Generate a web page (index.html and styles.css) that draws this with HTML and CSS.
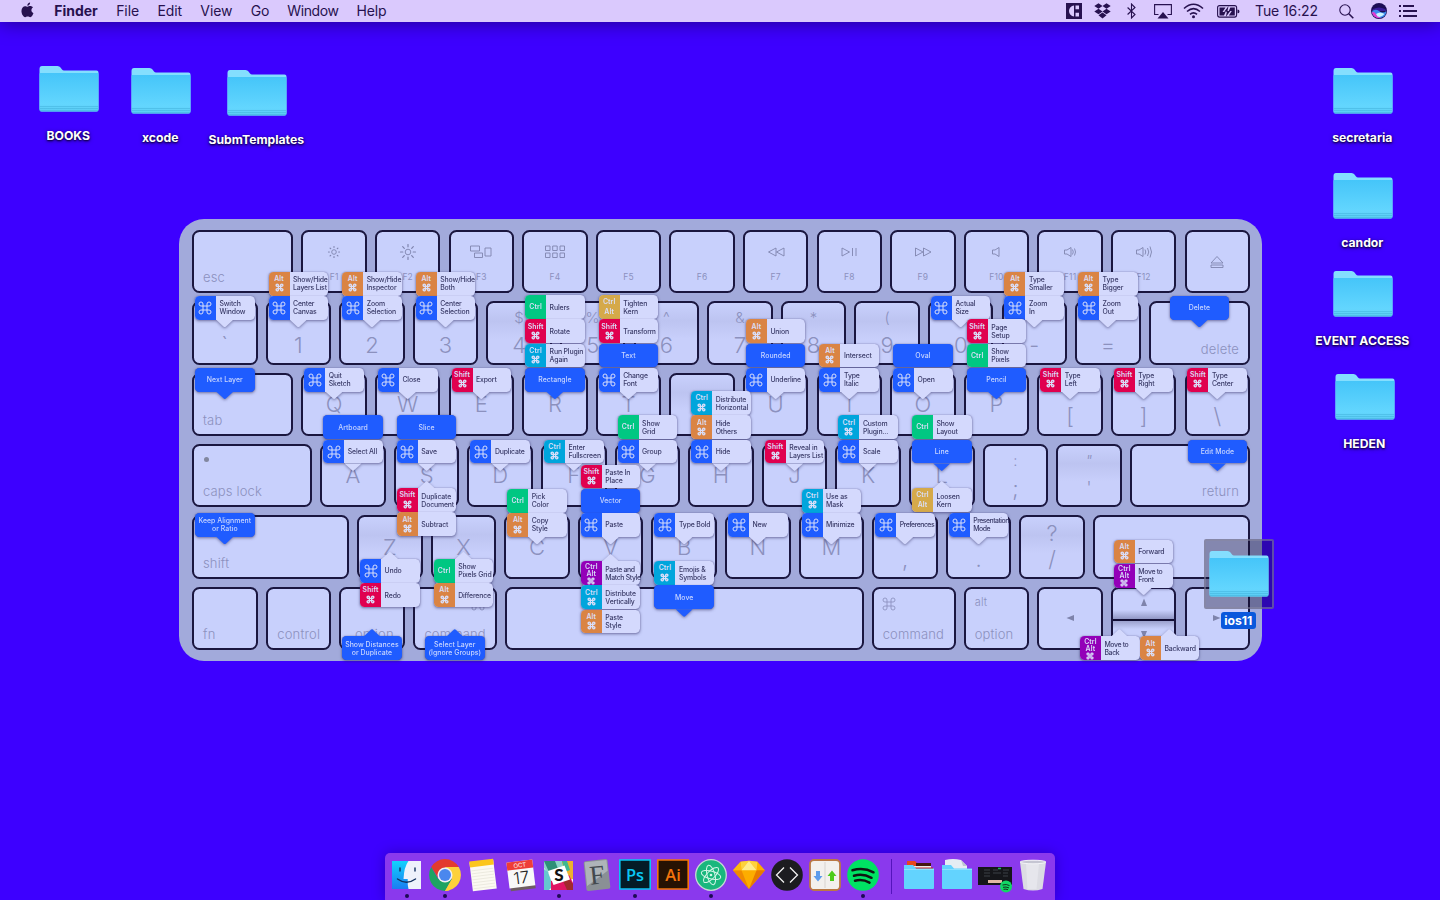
FILE: index.html
```html
<!DOCTYPE html>
<html lang="en">
<head>
<meta charset="utf-8">
<title>Desktop</title>
<link rel="stylesheet" href="styles.css">
</head>
<body>
<svg class="defs" aria-hidden="true">
  <defs>
    <linearGradient id="folderFront" x1="0" y1="0" x2="0" y2="1"><stop offset="0" stop-color="#45c5f9"/><stop offset=".8" stop-color="#63d6fe"/><stop offset="1" stop-color="#5acbf2"/></linearGradient>
    <symbol id="cmd" viewBox="0 0 24 24"><path d="M15 6v12a3 3 0 1 0 3-3H6a3 3 0 1 0 3 3V6a3 3 0 1 0-3 3h12a3 3 0 1 0-3-3" fill="none" stroke="currentColor"/></symbol>
    <symbol id="folder" viewBox="0 0 60 48">
      <path d="M.5 4Q.5 1 3 1h15.500q2 0 3 1.500l1.500 2q.8 1 2 1h32.500q2 0 2 2V44q0 2-2 2H2.500q-2 0-2-2z" fill="#84defe"/>
      <path d="M.5 9q0-1 1-1h57q1 0 1 1v36q0 1.800-2 1.800h-55q-2 0-2-1.800z" fill="url(#folderFront)"/>
      <path d="M.8 41.500h58.400M.8 43.500h58.400M1 45.500h58" stroke="#3fafd8" stroke-width=".7" opacity=".7"/>
    </symbol>
  </defs>
</svg>

<header class="menubar">
  <nav class="menus">
    <svg class="apple" viewBox="0 0 14 17"><path d="M9.800.5c.1 1.900-1.300 3.400-3 3.400C6.700 2.200 8.200.7 9.800.5zM7 5c.7 0 1.500-.7 2.900-.7 1.200 0 2.300.6 3 1.600-2.500 1.500-2.100 5 .5 6-.7 1.900-2 4.300-3.500 4.300-1 0-1.400-.6-2.700-.6s-1.700.6-2.700.6C2.300 16.200.5 12.700.5 9.700.5 6.300 2.600 4.400 4.400 4.400 5.600 4.400 6.400 5 7 5z"/></svg>
    <b class="app">Finder</b><span>File</span><span>Edit</span><span>View</span><span>Go</span><span class="narrow">Window</span><span>Help</span>
  </nav>
  <div class="status">
    <svg class="i-square" viewBox="0 0 16 16"><path d="M0 0h16v16H0z"/><path d="M8 2.500A5.300 5.500 0 0 0 3 8a5.300 5.500 0 0 0 5 5.500zM9.500 2.500H13v3.700H9.500zM9.500 9.800H13v3.700H9.500z" fill="#dac9fd"/></svg>
    <svg class="i-drop" viewBox="0 0 17 16"><path d="M4.500.3 8.500 3 4.500 5.800.3 3zM12.500.3 16.700 3l-4.200 2.800L8.500 3zM.3 8.500l4.200-2.700 4 2.700-4 2.800zM12.500 5.800l4.200 2.700-4.200 2.800-4-2.800zM4.500 12.200l4-2.700 4 2.700-4 3.200z"/></svg>
    <svg class="i-bt" viewBox="0 0 9 16"><path d="M.6 4.500l7.400 7L4.500 15V1L8 4.500l-7.400 7" class="ln"/></svg>
    <svg class="i-air" viewBox="0 0 18 15"><path d="M4.500 10.500H.6V.6h16.800v9.900h-3.900" class="ln"/><path d="M9 8l5.500 6.500h-11z"/></svg>
    <svg class="i-wifi" viewBox="0 0 21 16"><path d="M1 5.500q9.500-8.500 19 0M4 8.500q6.500-5.600 13 0M7 11.300q3.500-3 7 0" class="ln thick"/><circle cx="10.500" cy="13.800" r="1.500"/></svg>
    <svg class="i-bat" viewBox="0 0 23 13"><rect x=".6" y=".6" width="19" height="11.500" rx="2" class="ln"/><path d="M2.500 2.500h6l-3 4.500h3l-1.500 3.500H2.500zM17.800 10.500h-6l3-4.500h-3l1.500-3.500h4.500zM20.500 4.500q2 0 2 1.900t-2 1.900z"/><path d="M11.500 1 7.200 6.700h2.700L8.800 11.900 13.300 6h-2.800z"/></svg>
    <time>Tue 16:22</time>
    <svg class="i-search" viewBox="0 0 15 15"><circle cx="6" cy="6" r="5.200" class="ln"/><path d="M9.800 9.800l4.500 4.500" class="ln thick"/></svg>
    <svg class="i-siri" viewBox="0 0 16 16"><circle cx="8" cy="8" r="8" fill="#1c0d55"/><path d="M2 6q6-3 12 0l1.500 2H.8z" fill="#3a1d9c"/><path d="M.7 9Q4 5 8 8t7.300 0q0 5-5 6.800Q3 16 .7 9z" fill="#3c8cf0"/><path d="M.8 9.500Q3 8 5 11t5 4Q3 16 .8 9.500z" fill="#e03bd0"/><path d="M5 11q4-3 8.500 0-3.500 4-7 2.500z" fill="#c9f3ff"/></svg>
    <svg class="i-list" viewBox="0 0 18 12"><path d="M0 1h2M0 6h2M0 11h2M4 1h11M4 6h14M4 11h14" class="ln bar"/></svg>
  </div>
</header>

<main class="desktop">
  <div class="item books"><svg><use href="#folder"/></svg><span>BOOKS</span></div>
  <div class="item xcode"><svg><use href="#folder"/></svg><span>xcode</span></div>
  <div class="item subm"><svg><use href="#folder"/></svg><span>SubmTemplates</span></div>
  <div class="item secretaria"><svg><use href="#folder"/></svg><span>secretaria</span></div>
  <div class="item candor"><svg><use href="#folder"/></svg><span>candor</span></div>
  <div class="item event"><svg><use href="#folder"/></svg><span>EVENT ACCESS</span></div>
  <div class="item heden"><svg><use href="#folder"/></svg><span>HEDEN</span></div>

  <section class="keyboard">
    <div class="row r1">
      <div class="key wide low">esc</div>
      <div class="key fn"><svg viewBox="0 0 24 16"><circle cx="12" cy="8" r="2.300"/><path d="M12 2.500v.8M12 12.700v.8M6.500 8h.8M16.700 8h.8M8.100 4.100l.6.600M15.300 11.300l.6.600M8.100 11.900l.6-.6M15.300 4.700l.6-.6" class="cap"/></svg><i>F1</i></div>
      <div class="key fn"><svg viewBox="0 0 24 16"><circle cx="12" cy="8" r="2.800"/><path d="M12 .5v2.300M12 13.200v2.300M4.500 8h2.300M17.200 8h2.300M6.700 2.700l1.600 1.600M15.700 11.700l1.600 1.600M6.700 13.300l1.600-1.600M15.700 4.300l1.600-1.600" class="cap"/></svg><i>F2</i></div>
      <div class="key fn"><svg viewBox="0 0 24 16"><path d="M1.500 2h9v5h-9zM5.500 9h8v4.500h-8zM16 4h6v8h-6z"/></svg><i>F3</i></div>
      <div class="key fn"><svg viewBox="0 0 24 16"><path d="M2.500 2H7v4.500H2.500zM9.700 2h4.500v4.500H9.700zM17 2h4.500v4.500H17zM2.500 9H7v4.500H2.500zM9.700 9h4.500v4.500H9.700zM17 9h4.500v4.500H17z"/></svg><i>F4</i></div>
      <div class="key fn"><svg viewBox="0 0 24 16"></svg><i>F5</i></div>
      <div class="key fn"><svg viewBox="0 0 24 16"></svg><i>F6</i></div>
      <div class="key fn"><svg viewBox="0 0 24 16"><path d="M12 4v8L4.500 8zM20 4v8l-7.500-4z"/></svg><i>F7</i></div>
      <div class="key fn"><svg viewBox="0 0 24 16"><path d="M5 4v8l7.500-4zM15.500 4v8M19 4v8"/></svg><i>F8</i></div>
      <div class="key fn"><svg viewBox="0 0 24 16"><path d="M4.500 4v8L12 8zM12.500 4v8L20 8z"/></svg><i>F9</i></div>
      <div class="key fn"><svg viewBox="0 0 24 16"><path d="M8.500 6h2.500l4-2.500v9L11 10H8.500z"/></svg><i>F10</i></div>
      <div class="key fn"><svg viewBox="0 0 24 16"><path d="M6.500 6H9l4-2.500v9L9 10H6.500zM14.500 5.500q1.500 2.500 0 5M16.500 4.500q2 3.500 0 7"/></svg><i>F11</i></div>
      <div class="key fn"><svg viewBox="0 0 24 16"><path d="M4.500 6H7l4-2.500v9L7 10H4.500zM13 5.500q1.500 2.500 0 5M15.500 4q2.500 4 0 8M18 2.500q3 5.500 0 11"/></svg><i>F12</i></div>
      <div class="key eject"><svg viewBox="0 0 16 16"><path d="M8 2.500l6 6.500H2zM2 11h12v2.500H2z"/></svg></div>
    </div>

    <div class="row r2">
      <div class="key num"><em>`</em><div class="stack"><div class="tip"><b class="blue"><svg><use href="#cmd"/></svg></b><span>Switch<br>Window</span></div></div></div>
      <div class="key num"><em>1</em><div class="stack"><div class="tip"><b class="orange">Alt<svg><use href="#cmd"/></svg></b><span>Show/Hide<br>Layers List</span></div><div class="tip"><b class="blue"><svg><use href="#cmd"/></svg></b><span>Center<br>Canvas</span></div></div></div>
      <div class="key num"><em>2</em><div class="stack"><div class="tip"><b class="orange">Alt<svg><use href="#cmd"/></svg></b><span>Show/Hide<br>Inspector</span></div><div class="tip"><b class="blue"><svg><use href="#cmd"/></svg></b><span>Zoom<br>Selection</span></div></div></div>
      <div class="key num"><em>3</em><div class="stack"><div class="tip"><b class="orange">Alt<svg><use href="#cmd"/></svg></b><span>Show/Hide<br>Both</span></div><div class="tip"><b class="blue"><svg><use href="#cmd"/></svg></b><span>Center<br>Selection</span></div></div></div>
      <div class="key num shade"><u>$</u><em>4</em></div>
      <div class="key num shade"><u>%</u><em>5</em></div>
      <div class="key num shade"><u>^</u><em>6</em></div>
      <div class="key num shade"><u>&amp;</u><em>7</em></div>
      <div class="key num shade"><u>*</u><em>8</em></div>
      <div class="key num shade"><u>(</u><em>9</em></div>
      <div class="key num"><em>0</em><div class="stack"><div class="tip"><b class="blue"><svg><use href="#cmd"/></svg></b><span>Actual<br>Size</span></div></div></div>
      <div class="key num"><em>-</em><div class="stack"><div class="tip"><b class="orange">Alt<svg><use href="#cmd"/></svg></b><span>Type<br>Smaller</span></div><div class="tip"><b class="blue"><svg><use href="#cmd"/></svg></b><span>Zoom<br>In</span></div></div></div>
      <div class="key num"><em>=</em><div class="stack"><div class="tip"><b class="orange">Alt<svg><use href="#cmd"/></svg></b><span>Type<br>Bigger</span></div><div class="tip"><b class="blue"><svg><use href="#cmd"/></svg></b><span>Zoom<br>Out</span></div></div></div>
      <div class="key wide low right">delete<div class="stack"><div class="tip solid">Delete</div></div></div>
    </div>

    <div class="row r3">
      <div class="key wide low">tab<div class="stack near-left"><div class="tip solid">Next Layer</div></div></div>
      <div class="key"><em>Q</em><div class="stack"><div class="tip"><b class="blue"><svg><use href="#cmd"/></svg></b><span>Quit<br>Sketch</span></div></div></div>
      <div class="key"><em>W</em><div class="stack"><div class="tip"><b class="blue"><svg><use href="#cmd"/></svg></b><span>Close</span></div></div></div>
      <div class="key"><em>E</em><div class="stack"><div class="tip"><b class="red">Shift<svg><use href="#cmd"/></svg></b><span>Export</span></div></div></div>
      <div class="key"><em>R</em><div class="stack"><div class="tip"><b class="green">Ctrl</b><span>Rulers</span></div><div class="tip"><b class="red">Shift<svg><use href="#cmd"/></svg></b><span>Rotate</span></div><div class="tip"><b class="cyan">Ctrl<svg><use href="#cmd"/></svg></b><span>Run Plugin<br>Again</span></div><div class="tip solid">Rectangle</div></div></div>
      <div class="key"><em>T</em><div class="stack"><div class="tip"><b class="gold">Ctrl<br>Alt</b><span>Tighten<br>Kern</span></div><div class="tip"><b class="red">Shift<svg><use href="#cmd"/></svg></b><span>Transform</span></div><div class="tip solid">Text</div><div class="tip"><b class="blue"><svg><use href="#cmd"/></svg></b><span>Change<br>Font</span></div></div></div>
      <div class="key shade"></div>
      <div class="key"><em>U</em><div class="stack"><div class="tip"><b class="orange">Alt<svg><use href="#cmd"/></svg></b><span>Union</span></div><div class="tip solid">Rounded</div><div class="tip"><b class="blue"><svg><use href="#cmd"/></svg></b><span>Underline</span></div></div></div>
      <div class="key"><em>I</em><div class="stack"><div class="tip"><b class="orange">Alt<svg><use href="#cmd"/></svg></b><span>Intersect</span></div><div class="tip"><b class="blue"><svg><use href="#cmd"/></svg></b><span>Type<br>Italic</span></div></div></div>
      <div class="key"><em>O</em><div class="stack"><div class="tip solid">Oval</div><div class="tip"><b class="blue"><svg><use href="#cmd"/></svg></b><span>Open</span></div></div></div>
      <div class="key"><em>P</em><div class="stack"><div class="tip"><b class="red">Shift<svg><use href="#cmd"/></svg></b><span>Page<br>Setup</span></div><div class="tip"><b class="green">Ctrl</b><span>Show<br>Pixels</span></div><div class="tip solid">Pencil</div></div></div>
      <div class="key num"><em>[</em><div class="stack"><div class="tip"><b class="red">Shift<svg><use href="#cmd"/></svg></b><span>Type<br>Left</span></div></div></div>
      <div class="key num"><em>]</em><div class="stack"><div class="tip"><b class="red">Shift<svg><use href="#cmd"/></svg></b><span>Type<br>Right</span></div></div></div>
      <div class="key num"><em>\</em><div class="stack"><div class="tip"><b class="red">Shift<svg><use href="#cmd"/></svg></b><span>Type<br>Center</span></div></div></div>
    </div>

    <div class="row r4">
      <div class="key wide low caps"><s></s>caps lock</div>
      <div class="key"><em>A</em><div class="stack"><div class="tip solid">Artboard</div><div class="tip"><b class="blue"><svg><use href="#cmd"/></svg></b><span>Select All</span></div></div></div>
      <div class="key"><em>S</em><div class="stack"><div class="tip solid">Slice</div><div class="tip"><b class="blue"><svg><use href="#cmd"/></svg></b><span>Save</span></div></div><div class="stack below"><div class="tip"><b class="red">Shift<svg><use href="#cmd"/></svg></b><span>Duplicate<br>Document</span></div><div class="tip"><b class="orange">Alt<svg><use href="#cmd"/></svg></b><span>Subtract</span></div></div></div>
      <div class="key"><em>D</em><div class="stack"><div class="tip"><b class="blue"><svg><use href="#cmd"/></svg></b><span>Duplicate</span></div></div></div>
      <div class="key"><em>F</em><div class="stack"><div class="tip"><b class="cyan">Ctrl<svg><use href="#cmd"/></svg></b><span>Enter<br>Fullscreen</span></div></div></div>
      <div class="key"><em>G</em><div class="stack"><div class="tip"><b class="green">Ctrl</b><span>Show<br>Grid</span></div><div class="tip"><b class="blue"><svg><use href="#cmd"/></svg></b><span>Group</span></div></div></div>
      <div class="key"><em>H</em><div class="stack"><div class="tip"><b class="cyan">Ctrl<svg><use href="#cmd"/></svg></b><span>Distribute<br>Horizontal</span></div><div class="tip"><b class="orange">Alt<svg><use href="#cmd"/></svg></b><span>Hide<br>Others</span></div><div class="tip"><b class="blue"><svg><use href="#cmd"/></svg></b><span>Hide</span></div></div></div>
      <div class="key"><em>J</em><div class="stack"><div class="tip"><b class="red">Shift<svg><use href="#cmd"/></svg></b><span>Reveal in<br>Layers List</span></div></div></div>
      <div class="key"><em>K</em><div class="stack"><div class="tip"><b class="cyan">Ctrl<svg><use href="#cmd"/></svg></b><span>Custom<br>Plugin...</span></div><div class="tip"><b class="blue"><svg><use href="#cmd"/></svg></b><span>Scale</span></div></div></div>
      <div class="key"><em>L</em><div class="stack"><div class="tip"><b class="green">Ctrl</b><span>Show<br>Layout</span></div><div class="tip solid">Line</div></div><div class="stack below"><div class="tip"><b class="gold">Ctrl<br>Alt</b><span>Loosen<br>Kern</span></div></div></div>
      <div class="key num"><u>:</u><em>;</em></div>
      <div class="key num shade quote"><u>"</u><em>'</em></div>
      <div class="key wide low right">return<div class="stack near-right"><div class="tip solid">Edit Mode</div></div></div>
    </div>

    <div class="row r5">
      <div class="key shift low">shift<div class="stack near-left"><div class="tip solid">Keep Alignment<br>or Ratio</div></div></div>
      <div class="key shade"><em>Z</em><div class="stack below"><div class="tip"><b class="blue"><svg><use href="#cmd"/></svg></b><span>Undo</span></div><div class="tip"><b class="red">Shift<svg><use href="#cmd"/></svg></b><span>Redo</span></div></div></div>
      <div class="key shade"><em>X</em><div class="stack below"><div class="tip"><b class="green">Ctrl</b><span>Show<br>Pixels Grid</span></div><div class="tip"><b class="orange">Alt<svg><use href="#cmd"/></svg></b><span>Difference</span></div></div></div>
      <div class="key"><em>C</em><div class="stack"><div class="tip"><b class="green">Ctrl</b><span>Pick<br>Color</span></div><div class="tip"><b class="orange">Alt<svg><use href="#cmd"/></svg></b><span>Copy<br>Style</span></div></div></div>
      <div class="key"><em>V</em><div class="stack"><div class="tip"><b class="red">Shift<svg><use href="#cmd"/></svg></b><span>Paste In<br>Place</span></div><div class="tip solid">Vector</div><div class="tip"><b class="blue"><svg><use href="#cmd"/></svg></b><span>Paste</span></div></div><div class="stack below deeper"><div class="tip"><b class="purple">Ctrl<br>Alt<svg><use href="#cmd"/></svg></b><span class="tight">Paste and<br>Match Style</span></div><div class="tip"><b class="cyan">Ctrl<svg><use href="#cmd"/></svg></b><span>Distribute<br>Vertically</span></div><div class="tip"><b class="orange">Alt<svg><use href="#cmd"/></svg></b><span>Paste<br>Style</span></div></div></div>
      <div class="key"><em>B</em><div class="stack"><div class="tip"><b class="blue"><svg><use href="#cmd"/></svg></b><span>Type Bold</span></div></div><div class="stack lower"><div class="tip"><b class="cyan">Ctrl<svg><use href="#cmd"/></svg></b><span>Emojis &amp;<br>Symbols</span></div><div class="tip solid">Move</div></div></div>
      <div class="key"><em>N</em><div class="stack"><div class="tip"><b class="blue"><svg><use href="#cmd"/></svg></b><span>New</span></div></div></div>
      <div class="key"><em>M</em><div class="stack"><div class="tip"><b class="cyan">Ctrl<svg><use href="#cmd"/></svg></b><span>Use as<br>Mask</span></div><div class="tip"><b class="blue"><svg><use href="#cmd"/></svg></b><span>Minimize</span></div></div></div>
      <div class="key num"><em>,</em><div class="stack"><div class="tip"><b class="blue"><svg><use href="#cmd"/></svg></b><span class="tightest">Preferences</span></div></div></div>
      <div class="key num"><em>.</em><div class="stack"><div class="tip"><b class="blue"><svg><use href="#cmd"/></svg></b><span class="tightest">Presentation<br>Mode</span></div></div></div>
      <div class="key num big shade"><u>?</u><em>/</em></div>
      <div class="key shift"></div>
    </div>

    <div class="row r6">
      <div class="key low">fn</div>
      <div class="key low right">control</div>
      <div class="key low right">option<div class="stack below"><div class="tip solid">Show Distances<br>or Duplicate</div></div></div>
      <div class="key command low right"><svg class="sign"><use href="#cmd"/></svg>command<div class="stack below"><div class="tip solid">Select Layer<br>(Ignore Groups)</div></div></div>
      <div class="key space"></div>
      <div class="key command low"><svg class="sign"><use href="#cmd"/></svg>command</div>
      <div class="key low"><span class="alt">alt</span>option</div>
      <div class="key arrow"><svg viewBox="0 0 8 8"><path d="M8 1v6L.5 4z"/></svg></div>
      <div class="key updown">
        <div class="half"><svg viewBox="0 0 8 8"><path d="M4 .5 7 8H1z"/></svg></div>
        <div class="half"><svg viewBox="0 0 8 8"><path d="M4 7.500 7 0H1z"/></svg></div>
        <div class="stack"><div class="tip"><b class="orange">Alt<svg><use href="#cmd"/></svg></b><span>Forward</span></div><div class="tip"><b class="purple">Ctrl<br>Alt<svg><use href="#cmd"/></svg></b><span class="tight">Move to<br>Front</span></div></div>
        <div class="stack below pair"><div class="tip peak-right"><b class="purple">Ctrl<br>Alt<svg><use href="#cmd"/></svg></b><span class="tight">Move to<br>Back</span></div><div class="tip peak"><b class="orange">Alt<svg><use href="#cmd"/></svg></b><span>Backward</span></div></div>
      </div>
      <div class="key arrow"><svg viewBox="0 0 8 8"><path d="M0 1v6l7.500-3z"/></svg></div>
    </div>
  </section>

  <div class="item ios selected"><svg><use href="#folder"/></svg><span>ios11</span></div>
</main>

<footer class="dock">
  <div class="app-icon on"><svg viewBox="0 0 32 32"><defs><linearGradient id="fb" x1="0" y1="0" x2="0" y2="1"><stop offset="0" stop-color="#12d2fd"/><stop offset="1" stop-color="#1a7cf2"/></linearGradient></defs><path d="M1 2h17v28H1z" fill="url(#fb)"/><path d="M17.500 2H30v28H17.500q-1-4-.8-10h-4.200Q13 8 17.500 2z" fill="#eef2fb"/><path d="M9 9v3M24 9v3M6.500 20q9 6.500 18 0" fill="none" stroke="#12305f" stroke-width="1.400" stroke-linecap="round"/></svg></div>
  <div class="app-icon on"><svg viewBox="0 0 32 32"><path d="M16 8h13.800a16 16 0 0 0-27.600 0l7 11z" fill="#e33b2e"/><path d="M16 20v12A16 16 0 0 1 2.200 8l7 12z" fill="#1da362"/><path d="M22.900 20 16 32A16 16 0 0 0 29.800 8H16z" fill="#fdd13a"/><path d="M9.100 20 16 32l6.900-12z" fill="#1da362"/><path d="M22.900 20 16 32l4-.5 4-6z" fill="#fdd13a"/><circle cx="16" cy="16" r="7.500" fill="#f1f1f1"/><circle cx="16" cy="16" r="6" fill="#4a87ee"/></svg></div>
  <div class="app-icon"><svg viewBox="0 0 32 32"><g transform="rotate(-7 16 16)"><path d="M4 2h24v29H4z" fill="#fbf9f1"/><path d="M4 1h24v6H4z" fill="#fcc61c"/><path d="M5 10.500h22M5 13.500h22M5 16.500h22M5 19.500h22M5 22.500h22M5 25.500h22M5 28.500h22" stroke="#e3e0d4" stroke-width=".6"/></g></svg></div>
  <div class="app-icon"><svg viewBox="0 0 32 32"><g transform="rotate(-7 16 16)"><path d="M4 27h25v4H4z" fill="#6d5d61"/><path d="M3 2h26v26H3z" fill="#f8f8f8"/><path d="M3 2h26v8H3z" fill="#ee3d38"/><text x="16" y="8.300" class="oct">OCT</text><text x="16" y="24.500" class="day">17</text></g></svg></div>
  <div class="app-icon on"><svg viewBox="0 0 32 32"><path d="M1 2h29v29H1z" fill="#f5f5f5"/><path d="M1 2h18l2 6L5 14l-4-5z" fill="#8ad3c9"/><path d="M1 2h11l3 8-9 3z" fill="#2e9077"/><path d="M19 2h11v18l-4 1-7-17z" fill="#edb22e"/><path d="M19 2h5l3 9-5 2z" fill="#3eb891"/><path d="M1 10l4 3 5 14-4 4H1z" fill="#65c7cf"/><path d="M8 22l18-6 4 8v7H8z" fill="#e01563"/><path d="M20 22l6-2 4 5v6h-6z" fill="#a02a2c"/><path d="M5 12 21.500 6.500 27 20.500 10.500 26z" fill="#fff"/><text x="16" y="22" class="slack">S</text></svg></div>
  <div class="app-icon"><svg viewBox="0 0 32 32"><g transform="rotate(-6 16 16)"><rect x="4" y="1" width="24" height="30" rx="2" fill="#8a9095"/><path d="M5 2h22v11L5 26z" fill="#aeb4b8"/><text x="16" y="25" class="font">F</text></g></svg></div>
  <div class="app-icon on"><svg viewBox="0 0 32 32"><path d="M.8 1h30.400v29H.8z" fill="#041c27" stroke="#0ac6f3" stroke-width="1.600"/><text x="16" y="21.500" class="adobe ps">Ps</text></svg></div>
  <div class="app-icon"><svg viewBox="0 0 32 32"><path d="M.8 1h30.400v29H.8z" fill="#271203" stroke="#f4740c" stroke-width="1.600"/><text x="16" y="21.500" class="adobe ai">Ai</text></svg></div>
  <div class="app-icon on"><svg viewBox="0 0 32 32"><circle cx="16" cy="16" r="15.300" fill="#19b77d" stroke="#c7d8d6" stroke-width="1.300"/><g fill="none" stroke="#d5f5e8" stroke-width="1"><ellipse cx="16" cy="16" rx="10" ry="3.900" transform="rotate(15 16 16)"/><ellipse cx="16" cy="16" rx="10" ry="3.900" transform="rotate(75 16 16)"/><ellipse cx="16" cy="16" rx="10" ry="3.900" transform="rotate(135 16 16)"/></g><circle cx="16" cy="16" r="1.300" fill="#d5f5e8"/></svg></div>
  <div class="app-icon"><svg viewBox="-1 0 34 32"><path d="M7 2 16 .8 25 2l8 9-17 20L-1 11z" fill="#fdad00"/><path d="M-1 11h9l8 20z" fill="#f08a00"/><path d="M33 11h-9l-8 20z" fill="#e87a00"/><path d="M7 2 16 .8 8 11z" fill="#fed23c"/><path d="M25 2 16 .8 24 11z" fill="#fed23c"/><path d="M16 .8 24 11H8z" fill="#feec8b"/><path d="M7 2l1 9h-9z" fill="#fdbb12"/></svg></div>
  <div class="app-icon"><svg viewBox="0 0 32 32"><circle cx="16" cy="16" r="15.800" fill="#1c1c20"/><path d="M13 8.500 5.500 16l7.500 7.500M19 8.500l7.500 7.500-7.500 7.500" fill="none" stroke="#f3f3f3" stroke-width="1.300"/></svg></div>
  <div class="app-icon"><svg viewBox="0 0 32 32"><rect x="1" y="1" width="30" height="30" rx="4" fill="#f3f0ee" stroke="#bb7845" stroke-width="1.800"/><path d="M16 3v26" stroke="#d8d3d0"/><path d="M7 12h4v5h2.500L9 22.500 4.500 17H7z" fill="#5d9beb"/><path d="M21 22h4v-5h2.500L23 11.500 18.500 17H21z" fill="#4dcb1b"/></svg></div>
  <div class="app-icon on"><svg viewBox="0 0 32 32"><circle cx="16" cy="16" r="15.800" fill="#00e263"/><path d="M5.500 11.300q11-3.300 21 2M7 16.800q9-2.600 17.500 2M8 21.800q7.500-2 14.500 1.800" fill="none" stroke="#101512" stroke-width="2.500" stroke-linecap="round"/></svg></div>
  <div class="divider"></div>
  <div class="app-icon"><svg viewBox="0 0 32 32"><path d="M4 2h8l2 2h14v9H4z" fill="#e8481b"/><path d="M13 4h15v3H13z" fill="#431510"/><path d="M10 7h18v2H10z" fill="#e9e9e9"/><path d="M11 8.500h19V11H11z" fill="#d51f1f"/><path d="M1 6h9l3 3.500h18V29q0 1-1 1H2q-1 0-1-1z" fill="#63d3fe"/><path d="M1 10.500h30" stroke="#8be2ff"/></svg></div>
  <div class="app-icon"><svg viewBox="0 0 32 32"><path d="M4 1q8-2 16 0l6 6v8H4z" fill="#e6edf3"/><path d="M20 1l6 6h-4z" fill="#bcc6cf"/><path d="M1 6h9l3 3.500h18V29q0 1-1 1H2q-1 0-1-1z" fill="#63d3fe"/><path d="M1 10.500h30" stroke="#8be2ff"/></svg></div>
  <div class="app-icon"><svg class="shot" viewBox="0 0 34 32"><path d="M0 8h34v18H0z" fill="#15161a"/><path d="M6 11h6M6 14h6M6 17h6M15 11h5M15 14h8M25 11h6M25 14h5M25 17h5" stroke="#3c4046"/><path d="M20 9.500h3" stroke="#19b45d" stroke-width="1.500"/><path d="M10 21h14v3H10z" fill="#e2b8a3"/><circle cx="28" cy="27.500" r="6" fill="#12d765"/><path d="M24.500 26q4-1.300 7 .6M25 28.300q3-.8 6 .6M25.500 30.300q2.500-.6 4.500.4" fill="none" stroke="#10331f"/></svg></div>
  <div class="app-icon"><svg viewBox="0 0 32 32"><path d="M3 3q13-4 26 0l-3.500 27q-9.500 3-19 0z" fill="#dcdce3"/><path d="M9 5l1.500 25h9L22 5z" fill="#e6e6ec"/><ellipse cx="16" cy="3" rx="12.800" ry="1.800" fill="#c5c5d2" stroke="#f7f7fa" stroke-width=".9"/></svg></div>
</footer>
</body>
</html>
```
FILE: styles.css
```css
* { box-sizing: border-box; }

html, body { height: 100%; }

body {
  margin: 0;
  overflow: hidden;
  position: relative;
  background: #3d00ff;
  font-family: Inter, "Liberation Sans", sans-serif;
  display: flex;
  flex-direction: column;
  justify-content: space-between;
}

svg { display: block; flex: none; }
.defs { position: absolute; width: 0; height: 0; }

/* menu bar */
.menubar {
  height: 22px;
  flex: none;
  display: flex;
  justify-content: space-between;
  align-items: center;
  padding: 0 23px 0 21px;
  background: #dac9fd;
  box-shadow: 0 0 20px rgba(0, 0, 0, .5);
  color: #27114f;
  fill: #27114f;
  font-size: 14px;
  line-height: 22px;
}
.menus { display: flex; align-items: center; gap: 18.400px; white-space: nowrap; }
.apple { width: 13px; height: 16px; margin-top: -3px; }
.app { font-weight: 700; margin-left: 1.800px; letter-spacing: 0; }
.menus span { letter-spacing: -.1px; }
.menus .narrow { letter-spacing: -.4px; margin-left: -.5px; margin-right: -.5px; }
.status { display: flex; align-items: center; }
.ln { fill: none; stroke: #27114f; stroke-width: 1.100; }
.ln.thick { stroke-width: 1.600; }
.ln.bar { stroke-width: 1.900; }
.i-square { width: 16px; height: 16px; margin-right: 12px; }
.i-drop { width: 17px; height: 16px; margin-right: 16px; }
.i-bt { width: 9px; height: 16px; margin-right: 18px; }
.i-air { width: 18px; height: 15px; margin-right: 11px; }
.i-wifi { width: 21px; height: 16px; margin-right: 13px; }
.i-bat { width: 23px; height: 13px; margin-right: 15px; }
.status time { width: 63px; margin-right: 21px; letter-spacing: -.1px; white-space: nowrap; }
.i-search { width: 15px; height: 15px; margin-right: 17px; }
.i-siri { width: 16px; height: 16px; margin-right: 12px; }
.i-list { width: 18px; height: 12px; }

/* desktop icons */
.item {
  position: absolute;
  width: 120px;
  display: flex;
  flex-direction: column;
  align-items: center;
  gap: 14px;
}
.item svg { width: 60px; height: 48px; }
.item span {
  font-size: 12.200px;
  line-height: 17px;
  font-weight: 700;
  color: #fff;
  white-space: nowrap;
  margin-right: 1.500px;
  text-shadow: 0 1px 2px rgba(0, 0, 0, .8), 0 1px 4px rgba(0, 0, 0, .5);
}
.books { left: 9px; top: 65px; }
.xcode { left: 101px; top: 67px; }
.subm { left: 197px; top: 69px; }
.secretaria { left: 1303px; top: 67px; }
.candor { left: 1303px; top: 172px; }
.event { left: 1303px; top: 270px; }
.heden { left: 1305px; top: 373px; }
.ios {
  left: 1204px;
  top: 539px;
  width: 70px;
  height: 70px;
  padding-top: 11px;
  border-radius: 2px;
  border: 2px solid rgba(135, 135, 160, .55);
  background: rgba(20, 15, 50, .38);
}
.ios svg { margin-top: -2px; }
.ios span {
  background: #0a58dc;
  border-radius: 3px;
  padding: 0 3.500px;
  text-shadow: none;
}

/* keyboard */
.keyboard {
  position: absolute;
  left: 179px;
  top: 219px;
  width: 1083px;
  height: 441.500px;
  padding: 11px 12px 10.500px 13px;
  border-radius: 25px;
  background: #a2aadb;
  display: flex;
  flex-direction: column;
  justify-content: space-between;
  color: #8c91be;
}
.row { display: flex; height: 63.400px; gap: 8.100px; }
.r2 { --dip: 17.500px; }
.r3 { --dip: 18px; }
.r4 { --dip: 18.500px; --drop: 43px; }
.r5 { --dip: 20.500px; --drop: 42.500px; }
.r6 { --dip: 0px; --drop: 48.500px; }
.key {
  position: relative;
  flex: 0 0 65.500px;
  display: flex;
  flex-direction: column;
  align-items: center;
  background: #c8d0fc;
  border: 2px solid #1a163f;
  border-radius: 7.500px;
  font-size: 13px;
  line-height: 16px;
  font-weight: 300;
  letter-spacing: .15px;
}
.shade { background: linear-gradient(#c8d0fc, #bdc4f1 30%, #c8cffb 60%); }
.key.wide, .key.space { flex: 1; }
.key.shift { flex-basis: 157px; }
.key.command { flex-basis: 84px; }
.row .caps, .r4 .right { flex: 1; }
.low { align-items: flex-start; justify-content: flex-end; padding: 0 9px 6px; }
.low.right { align-items: flex-end; }
.key em { font-style: normal; font-size: 22px; line-height: 22px; margin-top: 18.500px; letter-spacing: 0; }
.key u { text-decoration: none; font-size: 15px; line-height: 16px; margin-top: 7px; }
.num em { margin-top: 30.500px; }
.num u + em { margin-top: 8px; }
.big u { font-size: 22px; line-height: 22px; margin-top: 5px; }
.big u + em { margin-top: 4px; }
.quote { font-style: italic; }
.quote em { font-size: 17px; }
.caps { justify-content: space-between; padding-top: 11px; }
.caps s { width: 5px; height: 5px; border-radius: 50%; background: #82879f; margin-left: 1px; }
.sign, .alt { margin-bottom: auto; }
.sign { width: 16px; height: 16px; margin-top: 7px; margin-left: -2px; stroke-width: 1.300; }
.alt { font-size: 11px; margin-top: 5px; }
.fn svg { width: 24px; height: 16px; margin-top: 12px; }
.fn svg, .eject svg { fill: none; stroke: #7f84ae; stroke-width: .9; }
.fn .cap { stroke-linecap: round; stroke-width: 1.200; }
.fn i { font-style: normal; font-size: 8.500px; line-height: 10px; margin-top: 12px; font-weight: 400; }
.eject, .arrow { justify-content: center; }
.eject svg { width: 16px; height: 16px; }
.arrow svg, .half svg { width: 8px; height: 8px; fill: #7e83ab; }
.half { flex: 1; width: 100%; display: flex; align-items: center; justify-content: center; }
.half:first-child { border-bottom: 2px solid #120e35; background: linear-gradient(transparent 70%, #9197c4); padding-bottom: 4px; }
.half:nth-child(2) { background: linear-gradient(#9ba1cd, transparent 30%); }

/* shortcut callouts */
.stack {
  position: absolute;
  z-index: 1;
  left: calc(50% - 29.800px);
  width: 59.600px;
  bottom: calc(100% - var(--dip) + 1px);
  display: flex;
  flex-direction: column;
  gap: .4px;
  filter: drop-shadow(0 1.500px 1.500px rgba(30, 25, 80, .5));
}
.below, .lower { bottom: auto; top: calc(var(--drop) - .700px); }
.deeper, .lower { top: 44px; }
.near-left { left: 1px; }
.near-right { left: auto; right: .8px; }
.tip {
  position: relative;
  display: flex;
  height: 23.800px;
  border-radius: 4.500px;
  background: #d4d9fd;
  color: #3a3b68;
  font-size: 6.900px;
  line-height: 8px;
  font-weight: 500;
  letter-spacing: -.15px;
  align-items: center;
  box-shadow: 0 0 1px rgba(50, 45, 110, .6);
}
.tip span { padding: 1px 0 0 3.500px; white-space: nowrap; }
.tip .tight { letter-spacing: -.35px; }
.tip .tightest { letter-spacing: -.5px; }
.tip b {
  width: 21px;
  height: 100%;
  flex: none;
  display: flex;
  flex-direction: column;
  align-items: center;
  justify-content: center;
  text-align: center;
  border-radius: 4.500px 0 0 4.500px;
  color: #d9def9;
  font-weight: 600;
  letter-spacing: .1px;
}
.tip b svg { width: 9px; height: 9px; stroke-width: 3.600; margin-top: .5px; }
.tip .blue svg { width: 16px; height: 16px; stroke-width: 1.500; margin: 0; }
.blue, .tip.solid { background: #1f5cff; }
.orange { background: #da8444; }
.red { background: #e0004f; }
.cyan { background: #00a5dc; }
.green { background: #00c782; }
.gold { background: #d5a94a; }
.purple { background: #9300b8; }
.tip .gold { line-height: 10px; }
.tip .purple { line-height: 7px; padding-top: 1px; }
.tip .purple svg { margin-top: 0; width: 8px; height: 8px; }
.tip.solid { justify-content: center; text-align: center; color: #c9d6ff; white-space: nowrap; padding-top: 1px; letter-spacing: .05px; }
.stack:not(.below) .tip:last-child::after,
.below:not(.pair) .tip:first-child::before,
.pair .tip::before {
  content: "";
  position: absolute;
  left: 21.300px;
  width: 17px;
  height: 7.500px;
  background: #d4d9fd;
}
.stack:not(.below) .tip:last-child::after { top: 100%; clip-path: polygon(0 0, 100% 0, 56% 92%, 50% 100%, 44% 92%); }
.below .tip::before { bottom: calc(100% - .3px); clip-path: polygon(0 100%, 100% 100%, 56% 8%, 50% 0, 44% 8%); }
.stack .tip.solid::before, .stack .tip.solid::after { background: #1f5cff !important; }
.stack.pair { left: -33px; width: 120px; flex-direction: row; }
.pair .tip { flex: 0 0 59.600px; }
.pair .peak-right::before { left: 31px; }
.pair .peak::before { left: 21px; }

/* dock */
.dock {
  width: 670px;
  height: 47px;
  margin: 0 auto;
  padding: 0 3px;
  flex: none;
  display: flex;
  background: #8a39ed;
  border-radius: 5px 5px 0 0;
  box-shadow: 0 0 14px rgba(0, 0, 0, .25);
}
.app-icon { width: 38px; display: flex; flex-direction: column; align-items: center; gap: 3px; padding-top: 6px; }
.app-icon svg { width: 32px; height: 32px; overflow: visible; }
.app-icon .shot { width: 34px; }
.app-icon.on::after { content: ""; width: 4px; height: 4px; border-radius: 50%; background: #1d0a55; }
.divider { width: 18px; padding: 6px 8px 6px 9px; }
.divider::after { content: ""; display: block; width: 1px; height: 35px; background: #5414bc; }
.app-icon text { text-anchor: middle; font-family: "Open Sans", sans-serif; }
.app-icon .oct { font: 6px Inter, sans-serif; fill: #fff; }
.app-icon .day { font: 300 16.500px Inter, sans-serif; fill: #222; }
.app-icon .slack { font: 900 17px Lato, sans-serif; fill: #111; }
.app-icon .font { font: 27px "Liberation Serif", serif; fill: #43494e; }
.app-icon .adobe { font-size: 16.500px; font-weight: 600; }
.app-icon .ps { fill: #0ac6f3; }
.app-icon .ai { fill: #f4740c; }
```
